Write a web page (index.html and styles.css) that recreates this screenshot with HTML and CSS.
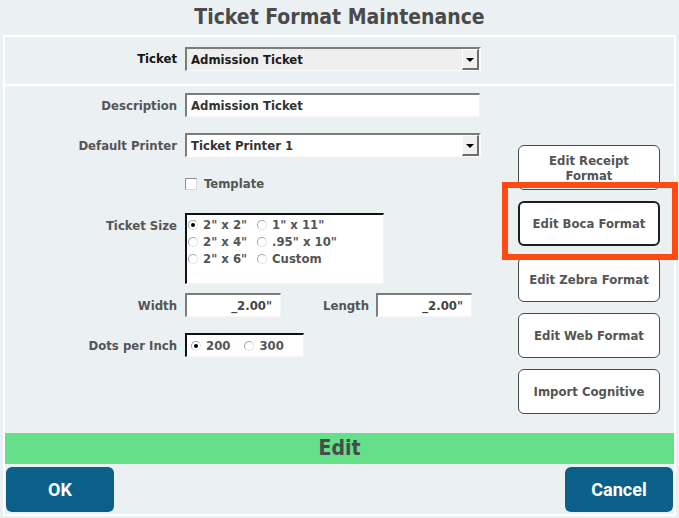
FILE: index.html
```html
<!DOCTYPE html>
<html lang="en">
<head>
<meta charset="utf-8">
<title>Ticket Format Maintenance</title>
<link rel="stylesheet" href="styles.css">
</head>
<body>
<h1 class="title">Ticket Format Maintenance</h1>
<div class="panel">
  <div class="ticket-row">
    <label class="lbl lbl-dark">Ticket</label>
    <div class="select select-gray">
      <span class="select-value">Admission Ticket</span>
      <span class="select-btn"><span class="tri"></span></span>
    </div>
  </div>
  <div class="main">
    <div class="form">
      <div class="row row-desc">
        <label class="lbl">Description</label>
        <div class="textbox textbox-wide">Admission Ticket</div>
      </div>
      <div class="row row-printer">
        <label class="lbl">Default Printer</label>
        <div class="select">
          <span class="select-value">Ticket Printer 1</span>
          <span class="select-btn"><span class="tri"></span></span>
        </div>
      </div>
      <div class="row row-template">
        <span class="lbl"></span>
        <span class="checkbox"></span>
        <span class="check-text">Template</span>
      </div>
      <div class="row row-size">
        <label class="lbl lbl-top">Ticket Size</label>
        <div class="optbox size-box">
          <div class="opt-grid">
            <span class="opt"><span class="radio checked"></span>2" x 2"</span>
            <span class="opt"><span class="radio"></span>1" x 11"</span>
            <span class="opt"><span class="radio"></span>2" x 4"</span>
            <span class="opt"><span class="radio"></span>.95" x 10"</span>
            <span class="opt"><span class="radio"></span>2" x 6"</span>
            <span class="opt"><span class="radio"></span>Custom</span>
          </div>
        </div>
      </div>
      <div class="row row-width">
        <label class="lbl">Width</label>
        <div class="textbox textbox-num">_2.00"</div>
        <label class="lbl-inline">Length</label>
        <div class="textbox textbox-num textbox-len">_2.00"</div>
      </div>
      <div class="row row-dpi">
        <label class="lbl">Dots per Inch</label>
        <div class="optbox dpi-box">
          <span class="opt opt-dpi1"><span class="radio checked"></span>200</span>
          <span class="opt"><span class="radio"></span>300</span>
        </div>
      </div>
    </div>
    <div class="actions">
      <button class="act">Edit Receipt<br>Format</button>
      <button class="act act-focus">Edit Boca Format</button>
      <button class="act">Edit Zebra Format</button>
      <button class="act">Edit Web Format</button>
      <button class="act">Import Cognitive</button>
      <span class="highlight"></span>
    </div>
  </div>
  <div class="status">Edit</div>
  <div class="footer">
    <button class="btn">OK</button>
    <button class="btn">Cancel</button>
  </div>
</div>
</body>
</html>
```

FILE: styles.css
```css
* { box-sizing: border-box; }

html, body {
  margin: 0;
  padding: 0;
  background: #ebf0f3;
}

body {
  width: 679px;
  height: 518px;
  overflow: hidden;
  font-family: "DejaVu Sans Condensed", "DejaVu Sans", sans-serif;
  font-stretch: condensed;
  font-weight: bold;
  font-size: 13px;
  color: #555;
}

.title {
  margin: 0;
  height: 35px;
  line-height: 35px;
  text-align: center;
  font-size: 21px;
  font-weight: bold;
  color: #4a4a4a;
}

.panel {
  margin-left: 3px;
  width: 673px;
  height: 481px;
  border: 2px solid #fff;
  display: flex;
  flex-direction: column;
}

.ticket-row {
  height: 49px;
  padding-top: 10px;
  border-bottom: 2px solid #fff;
  display: flex;
  align-items: flex-start;
}

.ticket-row .lbl { line-height: 24px; }

.lbl {
  width: 172px;
  flex: none;
  text-align: right;
  margin-right: 8px;
  color: #555;
}

.lbl-dark { color: #141414; }

.main {
  height: 347px;
  display: flex;
  position: relative;
}

.form {
  flex: 1;
  padding-top: 7px;
  display: flex;
  flex-direction: column;
}

.row {
  display: flex;
  align-items: center;
}

.row-desc { height: 24px; }
.row-printer { height: 24px; margin-top: 16px; }
.row-template { height: 12px; margin-top: 21px; }
.row-size { align-items: flex-start; margin-top: 23px; }
.row-width { height: 24px; margin-top: 9px; }
.row-dpi { height: 24px; margin-top: 16px; }

.lbl-top { padding-top: 5px; line-height: 16px; }

/* selects and text boxes */
.select {
  width: 296px;
  height: 24px;
  display: flex;
  align-items: stretch;
  background: #fff;
  border-style: solid;
  border-width: 2px 2px 1px 2px;
  border-color: #7c7c7c #fbfbfb #fbfbfb #7c7c7c;
  color: #333;
}

.select-gray { background: #efefef; color: #1c1c1c; }

.select-value {
  flex: 1;
  line-height: 21px;
  padding-left: 4px;
}

.select-btn {
  width: 17px;
  background: #f0f0f0;
  border-style: solid;
  border-width: 1px 2px 2px 1px;
  border-color: #fff #6d6d6d #6d6d6d #fff;
  display: flex;
  align-items: center;
  justify-content: center;
}

.tri {
  width: 0;
  height: 0;
  border-left: 4px solid transparent;
  border-right: 4px solid transparent;
  border-top: 4px solid #000;
  margin-top: 1px;
}

.textbox {
  height: 24px;
  background: #fff;
  border-style: solid;
  border-width: 2px 1px 1px 2px;
  border-color: #7c7c7c #f4f4f4 #f4f4f4 #7c7c7c;
  line-height: 21px;
  padding-left: 4px;
  color: #333;
}

.textbox-wide { width: 295px; }

.textbox-num {
  width: 96px;
  text-align: right;
  padding-right: 8px;
  color: #444;
}

.lbl-inline {
  margin-left: 42px;
  margin-right: 7px;
  color: #555;
}

/* checkbox */
.checkbox {
  width: 12px;
  height: 12px;
  background: #fff;
  border: 1px solid #8f8f8f;
  border-right-color: #d8d8d8;
  border-bottom-color: #d8d8d8;
  margin-right: 7px;
}

.check-text { line-height: 12px; color: #555; }

/* option boxes */
.optbox {
  background: #fff;
  border-style: solid;
  border-width: 2px 1px 1px 2px;
  border-color: #111 #f4f4f4 #f4f4f4 #111;
  color: #555;
}

.size-box {
  width: 199px;
  height: 71px;
  padding: 1px 0 0 0;
}

.opt-grid {
  display: grid;
  grid-template-columns: 69px auto;
  grid-auto-rows: 17px;
}

.opt {
  display: flex;
  align-items: center;
  white-space: nowrap;
  line-height: 17px;
}

.radio {
  width: 10px;
  height: 10px;
  border-radius: 50%;
  border: 1px solid #a8a8a8;
  border-right-color: #e2e2e2;
  border-bottom-color: #e2e2e2;
  background: #fff;
  margin-right: 5px;
  margin-left: 1px;
  position: relative;
  flex: none;
}

.radio.checked::after {
  content: "";
  position: absolute;
  left: 2px;
  top: 2px;
  width: 4px;
  height: 4px;
  border-radius: 50%;
  background: #000;
}

.dpi-box {
  width: 119px;
  height: 24px;
  display: flex;
  align-items: center;
  padding-left: 3px;
}

.opt-dpi1 { margin-right: 13px; }

/* right action buttons */
.actions {
  width: 142px;
  margin-right: 14px;
  padding-top: 59px;
  display: flex;
  flex-direction: column;
  gap: 11px;
  position: relative;
}

.act {
  height: 45px;
  width: 142px;
  background: #fff;
  border: 1px solid #4a4a4a;
  border-radius: 6px;
  font-family: inherit;
  font-stretch: condensed;
  font-weight: bold;
  font-size: 13px;
  line-height: 15px;
  color: #555;
  padding: 0;
}

.act-focus {
  border: 2px solid #1e1e1e;
}

.highlight {
  position: absolute;
  left: -16px;
  top: 96px;
  width: 176px;
  height: 78px;
  border: 6px solid #ff4b12;
  pointer-events: none;
}

/* status bar */
.status {
  height: 31px;
  line-height: 31px;
  background: #65df8a;
  text-align: center;
  font-size: 21px;
  color: #4a4a4a;
}

/* footer */
.footer {
  height: 50px;
  padding: 3px 1px 2px 1px;
  display: flex;
  justify-content: space-between;
  align-items: flex-start;
}

.btn {
  width: 108px;
  height: 45px;
  border: none;
  border-radius: 6px;
  background: #0a6088;
  color: #fff;
  font-family: Roboto, "Liberation Sans", sans-serif;
  font-weight: bold;
  font-size: 18px;
  line-height: 42px;
  padding: 0;
}
```
